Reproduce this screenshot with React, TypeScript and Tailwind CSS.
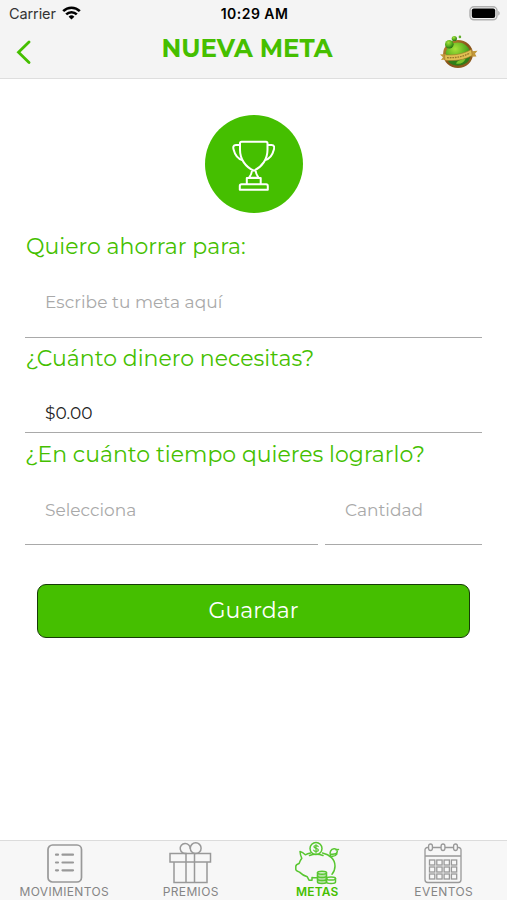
import React from 'react';

interface FieldProps {
  text: string;
  className: string;
}

const Field = ({ text, className }: FieldProps) => (
  <div className={`border-b border-[#a9a9a9] pl-5 text-[17px] leading-6 whitespace-nowrap ${className}`}>{text}</div>
);

const StatusBar = () => (
  <div className="flex h-7 items-center justify-between pl-[9px] pr-[7px] text-black">
    <div className="flex w-[180px] items-center gap-[6px]">
      <span className="text-[14.5px] leading-5 tracking-[-0.1px] text-[#333]">Carrier</span>
      <svg width="19" height="14" viewBox="0 0 19 14" className="mb-[2px]" fill="none" stroke="#000" strokeWidth="2.6">
        <path d="M1.2 5.2a11.8 11.8 0 0 1 16.6 0" />
        <path d="M4.2 8.4a7.5 7.5 0 0 1 10.6 0" />
        <path d="M9.5 13.6 6.6 10.7a4.1 4.1 0 0 1 5.8 0z" fill="#000" stroke="none" />
      </svg>
    </div>
    <span className="text-[14px] leading-5 font-semibold tracking-[0.45px]">10:29 AM</span>
    <div className="flex w-[180px] justify-end">
      <svg width="31" height="15" viewBox="0 0 31 15" className="mb-[2px]">
        <rect x="1" y="0.8" width="27" height="13" rx="4" fill="#f4f4f4" stroke="#b0b0b0" strokeWidth="1.5" />
        <rect x="2.8" y="2.5" width="23.4" height="9.6" rx="2" fill="#000" />
        <path d="M29.200 5c2 .7 2 3.900 0 4.600z" fill="#b0b0b0" />
      </svg>
    </div>
  </div>
);

const Badge = () => (
  <svg width="40" height="36" viewBox="0 0 40 36">
    <defs>
      <radialGradient id="ball" cx="0.4" cy="0.3" r="0.75">
        <stop offset="0" stopColor="#a8e23a" />
        <stop offset="0.55" stopColor="#56ad1e" />
        <stop offset="1" stopColor="#1c6210" />
      </radialGradient>
      <linearGradient id="gold" x1="0" y1="0" x2="1" y2="1">
        <stop offset="0" stopColor="#c08c35" />
        <stop offset="0.5" stopColor="#875218" />
        <stop offset="1" stopColor="#8f6023" />
      </linearGradient>
    </defs>
    <ellipse cx="19" cy="19" rx="13.600" ry="12.800" fill="url(#ball)" stroke="url(#gold)" strokeWidth="2.600" />
    <path d="M8 23c9 2 15 1 23.500-3-.5 6-5 10.300-12.500 10.300S9 27 8 23z" fill="#2f7d18" />
    <path d="M17 28.500c4 1 8-.5 9.500-4.500-3-.5-8 1-9.500 4.500z" fill="#7cc52c" />
    <circle cx="10.300" cy="9.300" r="4.300" fill="url(#ball)" />
    <circle cx="15.300" cy="3.500" r="2.600" fill="url(#ball)" />
    <circle cx="20.900" cy="1.900" r="1.300" fill="#62ae2b" />
    <path d="M1 19.500 7 19v5.500l-5 .5 2-2.800zM38.500 15.800l-6 .4v5.500l5-.2-1.500-2.800z" fill="#c2973a" />
    <path d="M5.500 19.800c10 .8 18-.6 27-5.300l.6 6c-8 4.500-17 5.700-27.100 4.800z" fill="#e0c052" stroke="#a5762a" strokeWidth="0.6" />
    <path d="M8 22.700c8.500.3 15.500-.8 23-4.600" fill="none" stroke="#9a762c" strokeWidth="1.300" strokeDasharray="1.700 0.900" />
  </svg>
);

const Trophy = () => (
  <svg width="43" height="52" viewBox="0 0 43 52" fill="none" stroke="#fff" strokeWidth="2" strokeLinejoin="round">
    <path d="M9.500 1.700h24.500c1 0 1.500.5 1.500 1.500v6.500c0 9.500-5.500 17.300-13.700 21C13.500 27 8 19.200 8 9.700V3.200c0-1 .5-1.500 1.500-1.500z" />
    <path d="M8 5H4C1.200 5 .9 7 1.600 9.500c1.200 4.800 4.300 9.300 8.700 10.600M35.500 5h4c2.800 0 3.100 2 2.400 4.500-1.200 4.800-4.300 9.300-8.700 10.600" />
    <path d="M20 30.800c-.2 2.700-1.200 4.500-3 7h9.600c-1.800-2.500-2.800-4.300-3-7" />
    <path d="M14.800 38h13.900v6.200H14.800zM9.500 44.200h24.600c1 0 1.700.7 1.700 1.700v3.900H7.800v-3.900c0-1 .7-1.700 1.700-1.700z" />
  </svg>
);

const ListIcon = () => (
  <svg width="36" height="39" viewBox="0 0 36 39" className="ml-px" fill="none" stroke="#999" strokeWidth="1.700">
    <rect x="1" y="1" width="33.500" height="37" rx="4.500" />
    <path d="M9 10.700h2M15.500 10.700h10.500M9 18.500h2M15.500 18.500h10.500M9 26.300h2M15.500 26.300h10.500" strokeWidth="2.200" strokeLinecap="round" />
  </svg>
);

const GiftIcon = () => (
  <svg width="43" height="42" viewBox="0 0 43 42" fill="none" stroke="#999" strokeWidth="1.500">
    <rect x="1" y="11.500" width="40.500" height="8.500" />
    <path d="M5 20v20.500h33V20M17 11.500v29M25.500 11.500v29" />
    <path d="M17.500 11.300a5 5 0 1 1 3.700-4.500" />
    <circle cx="26.700" cy="6.200" r="5.400" />
  </svg>
);

const PiggyIcon = () => (
  <svg width="47" height="44" viewBox="0 0 47 44" fill="none" stroke="#58c630" strokeWidth="1.500" strokeLinejoin="round" strokeLinecap="round">
    <path d="M16.500 12c-2 .3-3.700.9-5.200 1.800C9.700 12.200 7.900 11 6 10.500c.2 2.600.8 4.800 1.800 6.800-1.400 1.800-2.200 3.700-2.700 5.200-2 .6-3.300 1.500-3.300 3v3c0 1.200 1.500 1.800 3.700 2.600 2.500 2.500 5.200 3.900 7.800 4.700l1.700 3.400h3v-2.700c1.800.3 3.600.3 5.500.2M28.500 12c7.500 1.500 12.500 6.500 12.500 13 0 3.500-1 6-3 8.300" />
    <path d="M15.500 14.500c4.500-1.700 9-1.700 13.500 0" />
    <path d="M36.500 15c-1.500-3.500.5-7 3.500-7.200 3-.2 4.200 2.600 2.500 4.300-1.300 1.200-3.500 1.200-6 1.200M37.500 15.200c2.500.5 4-.2 5.500-2.400M44.500 8.500l-2.500.3" />
    <circle cx="22" cy="7.500" r="6" />
    <path d="M24.200 5.500c-.8-1.300-4.300-1.300-4.300.3 0 2 4.500 1.200 4.500 3.200 0 1.900-3.800 1.800-4.700.2M22 3.700v8" strokeWidth="1.200" />
    <path d="M23.500 31.800V41c0 2 9 2 9 0v-9.200" fill="#b5e3a5" />
    <ellipse cx="28" cy="31.800" rx="4.500" ry="1.500" fill="#d7efd0" />
    <path d="M23.500 35c0 1.900 9 1.900 9 0M23.500 38c0 1.900 9 1.900 9 0M32.500 37.500V41c0 2 9 2 9 0v-3.500" />
    <ellipse cx="37" cy="37.500" rx="4.500" ry="1.600" />
  </svg>
);

const CalendarIcon = () => (
  <svg width="38" height="41" viewBox="0 0 38 41" className="mr-px" fill="none" stroke="#999" strokeWidth="1.300">
    <path d="M4.500 4.500H3.300A2.300 2.300 0 0 0 1 6.800v30a2.700 2.700 0 0 0 2.700 2.700h30.600a2.700 2.700 0 0 0 2.700-2.700v-30a2.300 2.300 0 0 0-2.300-2.300h-1.200M8.500 4.500H17M21 4.500h8.500M1 13h36" />
    <rect x="4.600" y="1" width="3.800" height="6.500" rx="1.900" />
    <rect x="17.100" y="1" width="3.800" height="6.500" rx="1.900" />
    <rect x="29.600" y="1" width="3.800" height="6.500" rx="1.900" />
    {[17, 24, 31].map((y) =>
      [5.5, 12.8, 20.1, 27.4].map((x) => <rect key={`${x}-${y}`} x={x} y={y} width="5.300" height="5" />)
    )}
  </svg>
);

const tabs = [
  { label: 'MOVIMIENTOS', icon: <ListIcon />, className: 'text-[#858585] tracking-[0.35px]' },
  { label: 'PREMIOS', icon: <GiftIcon />, className: 'text-[#858585] tracking-[0.35px]' },
  { label: 'METAS', icon: <PiggyIcon />, className: 'text-[#45bf00] font-semibold tracking-[0.15px]' },
  { label: 'EVENTOS', icon: <CalendarIcon />, className: 'text-[#858585] tracking-[0.4px]' },
];

const App = () => {
  return (
    <div className="flex h-[900px] w-[507px] flex-col overflow-hidden bg-white font-['Montserrat','Inter',sans-serif]">
      <header className="h-[79px] shrink-0 border-b border-[#dedede] bg-[#f4f4f4]">
        <div className="font-['Inter',sans-serif]">
          <StatusBar />
        </div>
        <div className="flex h-[50px] items-center justify-between pl-4 pr-7">
          <div className="flex w-[60px] pb-[2px]">
            <svg width="16" height="24" viewBox="0 0 16 24" fill="none" stroke="#45bf00" strokeWidth="2.800" strokeLinecap="round">
              <path d="M13 2 2.500 12.200 13 22.500" />
            </svg>
          </div>
          <h1 className="mr-[13px] mb-[10px] text-[24.5px] leading-8 font-bold whitespace-nowrap text-[#45bf00]">NUEVA META</h1>
          <div className="mb-px flex w-[48px] justify-end">
            <Badge />
          </div>
        </div>
      </header>

      <main className="flex-1 px-[25px] pt-[37px] text-[#a9a9a9]">
        <div className="mx-auto -mb-px -mt-px flex size-[98px] items-center justify-center rounded-full bg-[#45bf00] pt-1">
          <Trophy />
        </div>

        {/* Formulario */}
        <h2 className="mt-[21px] h-7 pl-px text-[22px] leading-7 whitespace-nowrap text-[#45bf00]">Quiero ahorrar para:</h2>
        <Field text="Escribe tu meta aquí" className="h-[77px] pt-[29px] tracking-[0.05px]" />
        <h2 className="mt-[7px] h-7 pl-[0.5px] text-[22px] leading-7 whitespace-nowrap text-[#45bf00]">¿Cuánto dinero necesitas?</h2>
        <Field text="$0.00" className="h-[60px] pt-[28px] text-[#222]" />
        <h2 className="mt-2 h-7 text-[22px] leading-7 whitespace-nowrap text-[#45bf00]">¿En cuánto tiempo quieres lograrlo?</h2>
        <div className="flex gap-[7px]">
          <Field text="Selecciona" className="h-[76px] w-[293px] pt-[29px]" />
          <Field text="Cantidad" className="h-[76px] w-[157px] pt-[29px]" />
        </div>

        <button className="mx-auto mt-[39px] flex h-[54px] w-[433px] items-center justify-center rounded-[9px] border-[1.5px] border-[#173b08] bg-[#45bf00] pb-px text-[22px] text-white">
          Guardar
        </button>
      </main>

      <nav className="grid h-[60px] shrink-0 grid-cols-4 border-t border-[#dcdcdc] bg-[#f7f7f7] pl-px font-['Inter',sans-serif]">
        {tabs.map((tab) => (
          <div key={tab.label} className="flex flex-col items-center">
            <div className="flex h-11 items-center justify-center">{tab.icon}</div>
            <span className={`text-[12px] leading-[14px] ${tab.className}`}>{tab.label}</span>
          </div>
        ))}
      </nav>
    </div>
  );
};

export default App;
